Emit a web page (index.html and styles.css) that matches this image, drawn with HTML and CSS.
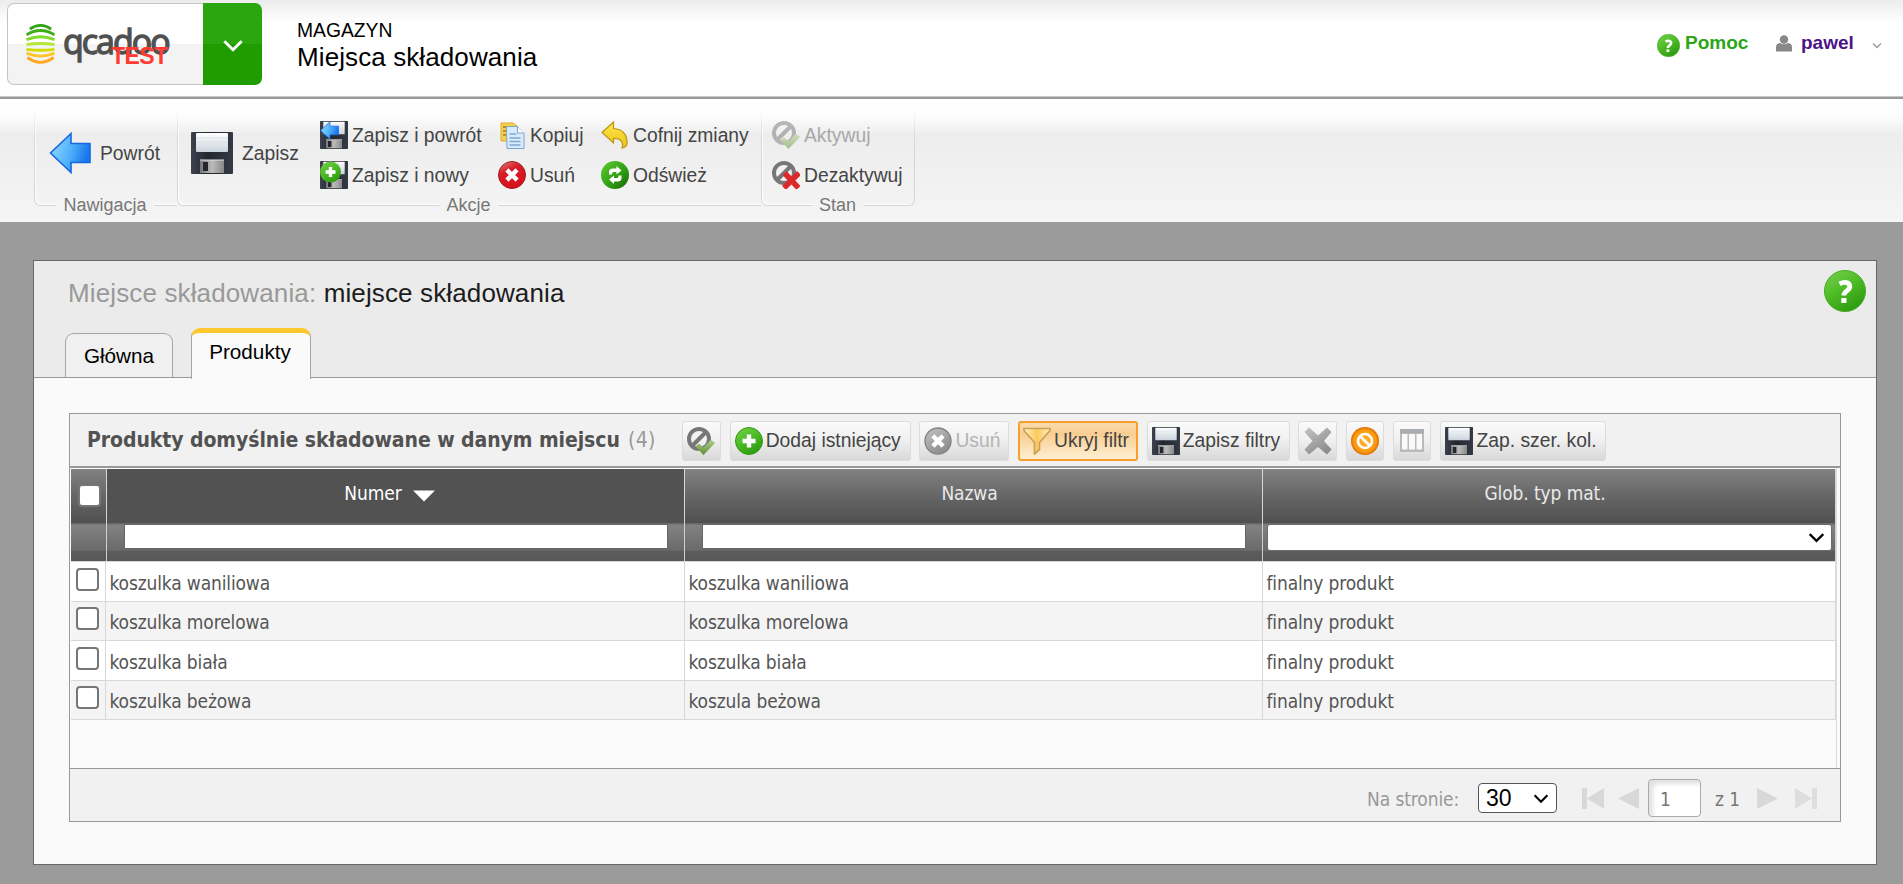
FILE: index.html
```html
<!DOCTYPE html>
<html lang="pl">
<head>
<meta charset="utf-8">
<title>Miejsca składowania</title>
<link rel="stylesheet" href="styles.css">
</head>
<body>
<svg class="defs" width="0" height="0" aria-hidden="true">
  <defs>
    <linearGradient id="gBlue" x1="0" y1="0" x2="1" y2="0.3"><stop offset="0" stop-color="#9adcff"/><stop offset=".6" stop-color="#4fb0fa"/><stop offset="1" stop-color="#1a78ee"/></linearGradient>
    <linearGradient id="gDark" x1="0" y1="0" x2="1" y2="0"><stop offset="0" stop-color="#3c4250"/><stop offset=".4" stop-color="#23262e"/><stop offset="1" stop-color="#343a46"/></linearGradient>
    <linearGradient id="gLabel" x1="0" y1="0" x2="0" y2="1"><stop offset="0" stop-color="#fff"/><stop offset="1" stop-color="#c9d2dc"/></linearGradient>
    <linearGradient id="gMetal" x1="0" y1="0" x2="1" y2="0"><stop offset="0" stop-color="#777"/><stop offset=".5" stop-color="#bbb"/><stop offset="1" stop-color="#888"/></linearGradient>
    <linearGradient id="gGreen" x1="0" y1="0" x2=".6" y2="1"><stop offset="0" stop-color="#7bd04e"/><stop offset=".5" stop-color="#4fbd28"/><stop offset="1" stop-color="#2f9c12"/></linearGradient>
    <linearGradient id="gRefresh" x1="0" y1="0" x2="1" y2="1"><stop offset="0" stop-color="#5cd02c"/><stop offset=".6" stop-color="#2f9a14"/><stop offset="1" stop-color="#156300"/></linearGradient>
    <linearGradient id="gRed" x1="0" y1="0" x2=".5" y2="1"><stop offset="0" stop-color="#e88a8a"/><stop offset=".4" stop-color="#d6202a"/><stop offset="1" stop-color="#d8101a"/></linearGradient>
    <linearGradient id="gGrey" x1="0" y1="0" x2=".6" y2="1"><stop offset="0" stop-color="#c4c4c4"/><stop offset="1" stop-color="#8c8c8c"/></linearGradient>
    <linearGradient id="gYellow" x1="0" y1="0" x2="0" y2="1"><stop offset="0" stop-color="#ffe94a"/><stop offset="1" stop-color="#ecc11a"/></linearGradient>
    <linearGradient id="gFunnel" x1="0" y1="0" x2="1" y2="0"><stop offset="0" stop-color="#fff1c0"/><stop offset=".5" stop-color="#fcc95a"/><stop offset="1" stop-color="#fff0c4"/></linearGradient>
    <radialGradient id="gOrange" cx=".5" cy=".5" r=".5"><stop offset="0" stop-color="#ffb52e"/><stop offset=".8" stop-color="#f79a10"/><stop offset="1" stop-color="#e06a00"/></radialGradient>
    <linearGradient id="gCheck" x1="0" y1="0" x2="0" y2="1"><stop offset="0" stop-color="#b3cf92"/><stop offset="1" stop-color="#5f8f2e"/></linearGradient>

    <symbol id="arrow" viewBox="0 0 42 42"><path d="M22 1.500 1.500 21 22 40.500V30.500h19V11.500H22z" fill="url(#gBlue)" stroke="#1668e0" stroke-width="1.600"/></symbol>
    <symbol id="floppy" viewBox="0 0 42 42"><rect width="42" height="42" rx="1" fill="url(#gDark)"/><rect x="5" y="1" width="32" height="19" rx="1" fill="url(#gLabel)"/><path d="M5 6h32M5 10h32M5 14h32" stroke="#dfe4ea" stroke-width="1"/><path d="M9 28h24v13H9z" fill="url(#gMetal)"/><path d="M12 30h5v9h-5z" fill="#23262e"/><path d="M9 28h24" stroke="#e0e0e0"/></symbol>
    <symbol id="saveback" viewBox="0 0 28 28"><use href="#floppy" width="28" height="28"/><use href="#arrow" x="0" y="-1" width="19" height="21"/></symbol>
    <symbol id="savenew" viewBox="0 0 28 28"><use href="#floppy" width="28" height="28"/><circle cx="10.500" cy="11" r="10.500" fill="url(#gGreen)"/><path d="M10.500 6v10M5.500 11h10" stroke="#fff" stroke-width="3.400"/></symbol>
    <symbol id="copy" viewBox="0 0 28 28"><path d="M3 2h12l4 3v15H3z" fill="#f7cf4e" stroke="#d9ac36"/><path d="M5 6h3M5 10h3M5 14h3" stroke="#a87f1a" stroke-width="1.500"/><path d="M8.500 5.500h11l6.500 7v15H9z" fill="#d9ebfa" stroke="#7aa5cf"/><path d="M19.500 5.500v6.500h6.500" fill="#fff" stroke="#7aa5cf"/><path d="M11.500 13h7M11.500 17h11M11.500 20.500h11M11.500 24h11" stroke="#7fa9d4" stroke-width="1.600"/></symbol>
    <symbol id="del" viewBox="0 0 28 28"><circle cx="14" cy="14" r="13.500" fill="url(#gRed)" stroke="#9c1a1f"/><path d="M10.500 10.500l7 7M17.500 10.500l-7 7" stroke="#fff" stroke-width="4.500" stroke-linecap="square"/></symbol>
    <symbol id="delgrey" viewBox="0 0 28 28"><circle cx="14" cy="14" r="13" fill="url(#gGrey)" stroke="#858585" stroke-width="1.400"/><path d="M10.500 10.500l7 7M17.500 10.500l-7 7" stroke="#fff" stroke-width="4.500" stroke-linecap="square"/></symbol>
    <symbol id="undo" viewBox="0 0 28 28"><path d="M1 11.500 12.500 1v6.500C21.500 8 26.500 14 26 22.500c-.2 2.500-2 4-5 4.500 2-6-1.500-10-8.500-9.500V22z" fill="url(#gYellow)" stroke="#bd9313" stroke-width="1.200"/></symbol>
    <symbol id="refresh" viewBox="0 0 28 28"><circle cx="14" cy="14" r="14" fill="url(#gRefresh)"/><path d="M8 13.500V11q0-3.500 4-3.500h3.500V5l5 4.500-5 4V11H12q-1 0-1 2.500zM20.500 14.500V17q0 3.500-4 3.500H13V23l-5-4.500 5-4V17h3.500q1 0 1-2.500z" fill="#fff"/></symbol>
    <symbol id="activate" viewBox="0 0 28 28"><circle cx="12" cy="12" r="10" fill="#f1f1f1" fill-opacity=".5" stroke="#777" stroke-width="4"/><path d="M5.500 18.500 18.500 5.500" stroke="#777" stroke-width="4"/><path d="M8.500 19.500l3.500-3 4.500 4L24 12.500l4 3.500-11.500 12z" fill="url(#gCheck)"/></symbol>
    <symbol id="deactivate" viewBox="0 0 28 28"><circle cx="12" cy="12" r="10" fill="#f1f1f1" fill-opacity=".5" stroke="#777" stroke-width="4"/><path d="M5.500 18.500 18.500 5.500" stroke="#777" stroke-width="4"/><path d="M12.500 12 26.500 27M27 12 12 27" stroke="#dc2a2a" stroke-width="5.500"/></symbol>
    <symbol id="add" viewBox="0 0 28 28"><circle cx="14" cy="14" r="13.500" fill="url(#gGreen)" stroke="#2f9c12"/><path d="M14 7.500v13M7.500 14h13" stroke="#fff" stroke-width="4.400"/></symbol>
    <symbol id="funnel" viewBox="0 0 28 28"><path d="M1 1.500h26v2L16.500 15.500v7L11.500 27V15.500L1 3.500z" fill="url(#gFunnel)" stroke="#c9a25a" stroke-width="1.700"/></symbol>
    <symbol id="cross" viewBox="0 0 28 28"><path d="M5 .5 14 8.500 23 .5 27.500 5 20 14l7.500 8.500L23 27.500 14 20l-9 7.500L.5 22.500 8.500 14 .5 5z" fill="url(#gGrey)"/></symbol>
    <symbol id="block" viewBox="0 0 28 28"><circle cx="14" cy="14" r="14" fill="url(#gOrange)"/><circle cx="14" cy="14" r="7" fill="none" stroke="#fff" stroke-width="2.600"/><path d="M9.500 9.500l9 9" stroke="#fff" stroke-width="2.600"/></symbol>
    <symbol id="columns" viewBox="0 0 28 28"><path d="M2 2h24v23H2z" fill="#b9b9b9"/><path d="M2 2h24v4H2z" fill="#a9acb0"/><path d="M4 7h5.500v15.500H4zM11 7h6v15.500h-6zM18.500 7H24v15.500h-5.500z" fill="#fafafa"/></symbol>
    <symbol id="help" viewBox="0 0 42 42"><circle cx="21" cy="21" r="20.500" fill="url(#gGreen)" stroke="#45ab22"/><path d="M15.500 13.800c5-2.600 10.300-1.300 10.300 2.700 0 4.200-6 4.500-6 9" fill="none" stroke="#fff" stroke-width="4.800"/><path d="M17.300 28h5.200v5h-5.200z" fill="#fff"/></symbol>
    <symbol id="chev" viewBox="0 0 20 12"><path d="M2 2l8 8 8-8" fill="none" stroke="currentColor" stroke-width="2.600"/></symbol>
  </defs>
</svg>

<header class="top">
  <div class="brand">
    <div class="logo">
      <svg width="29" height="42" viewBox="0 0 30 42" fill="none" stroke-width="3">
        <path d="M4 5.500Q15-2 26 5.500" stroke="#2fa313"/>
        <path d="M.5 11.500Q15 2.500 29.500 11.500" stroke="#3fae1a"/>
        <path d="M.5 16.500Q15 10.500 29.500 16.500" stroke="#7fdc2c"/>
        <path d="M.5 21.500Q15 19.500 29.500 21.500" stroke="#b6e83a"/>
        <path d="M.5 26.500Q15 28.500 29.500 26.500" stroke="#d3dc00"/>
        <path d="M.5 30.500Q15 36.500 29.500 30.500" stroke="#ffc52a"/>
        <path d="M1.500 35Q15 45 28.500 35" stroke="#ffa61a"/>
      </svg>
      <span class="word">qcadoo</span><span class="test">TEST</span>
    </div>
    <div class="menu-btn"><svg width="22" height="13"><use href="#chev"/></svg></div>
  </div>
  <div class="crumb"><div class="crumb-top">MAGAZYN</div><div class="crumb-main">Miejsca składowania</div></div>
  <div class="user">
    <svg width="23" height="23"><use href="#help"/></svg><span class="pomoc">Pomoc</span>
    <svg class="person" width="16" height="17" viewBox="0 0 16 17"><circle cx="8" cy="4.500" r="4.200" fill="#888"/><path d="M0 16.500V12q0-3.500 4-4 4 2.500 8 0 4 .5 4 4v4.500z" fill="#888"/></svg><span class="name">pawel</span>
    <svg class="down" width="10" height="7"><use href="#chev"/></svg>
  </div>
</header>

<nav class="ribbon">
  <section class="group g-nav">
    <div class="items"><div class="big"><svg><use href="#arrow"/></svg><span>Powrót</span></div></div>
    <div class="legend"><span>Nawigacja</span></div>
  </section>
  <section class="group g-act">
    <div class="items">
      <div class="big"><svg><use href="#floppy"/></svg><span>Zapisz</span></div>
      <div class="stack s1"><div class="small"><svg><use href="#saveback"/></svg><span>Zapisz i powrót</span></div><div class="small"><svg><use href="#savenew"/></svg><span>Zapisz i nowy</span></div></div>
      <div class="stack s2"><div class="small"><svg><use href="#copy"/></svg><span>Kopiuj</span></div><div class="small"><svg><use href="#del"/></svg><span>Usuń</span></div></div>
      <div class="stack"><div class="small"><svg><use href="#undo"/></svg><span>Cofnij zmiany</span></div><div class="small"><svg><use href="#refresh"/></svg><span>Odśwież</span></div></div>
    </div>
    <div class="legend"><span>Akcje</span></div>
  </section>
  <section class="group g-state">
    <div class="items">
      <div class="stack"><div class="small off"><svg><use href="#activate"/></svg><span>Aktywuj</span></div><div class="small"><svg><use href="#deactivate"/></svg><span>Dezaktywuj</span></div></div>
    </div>
    <div class="legend"><span>Stan</span></div>
  </section>
</nav>

<main class="page">
  <div class="page-head">
    <div class="title-row"><h1><span>Miejsce składowania:</span> miejsce składowania</h1><svg width="42" height="42"><use href="#help"/></svg></div>
    <div class="tabs"><div class="tab">Główna</div><div class="tab active">Produkty</div></div>
  </div>

  <div class="grid">
    <div class="grid-head">
      <div class="grid-title">Produkty domyślnie składowane w danym miejscu</div><div class="count">(4)</div>
      <div class="tools">
        <div class="btn b1"><svg><use href="#activate"/></svg></div>
        <div class="btn b2"><svg><use href="#add"/></svg>Dodaj istniejący</div>
        <div class="btn b3 dis"><svg><use href="#delgrey"/></svg>Usuń</div>
        <div class="btn b4 on"><svg><use href="#funnel"/></svg>Ukryj filtr</div>
        <div class="btn b5"><svg><use href="#floppy"/></svg>Zapisz filtry</div>
        <div class="btn b6"><svg><use href="#cross"/></svg></div>
        <div class="btn b7"><svg><use href="#block"/></svg></div>
        <div class="btn b8"><svg><use href="#columns"/></svg></div>
        <div class="btn b9"><svg><use href="#floppy"/></svg>Zap. szer. kol.</div>
      </div>
    </div>
    <div class="table">
      <div class="row th"><div class="c ck"><i class="box"></i></div><div class="c sorted"><span>Numer</span><svg width="22" height="12" viewBox="0 0 22 12"><path d="M0 .5h22L11 11.500z" fill="#fff"/></svg></div><div class="c">Nazwa</div><div class="c">Glob. typ mat.</div></div>
      <div class="row filter"><div class="c"></div><div class="c"><i class="inp"></i></div><div class="c"><i class="inp"></i></div><div class="c last"><div class="sel"><svg width="17" height="11"><use href="#chev"/></svg></div></div></div>
      <div class="row td"><div class="c ck"><i class="box"></i></div><div class="c">koszulka waniliowa</div><div class="c">koszulka waniliowa</div><div class="c">finalny produkt</div></div>
      <div class="row td alt"><div class="c ck"><i class="box"></i></div><div class="c">koszulka morelowa</div><div class="c">koszulka morelowa</div><div class="c">finalny produkt</div></div>
      <div class="row td tall"><div class="c ck"><i class="box"></i></div><div class="c">koszulka biała</div><div class="c">koszulka biała</div><div class="c">finalny produkt</div></div>
      <div class="row td alt"><div class="c ck"><i class="box"></i></div><div class="c">koszulka beżowa</div><div class="c">koszula beżowa</div><div class="c">finalny produkt</div></div>
    </div>
    <div class="pager">
      <span class="per">Na stronie:</span>
      <div class="psel"><span>30</span><svg width="16" height="11"><use href="#chev"/></svg></div>
      <svg class="first" width="22" height="21" viewBox="0 0 22 21"><path d="M0 0h5v21H0zM22 0v21L5 10.500z" fill="#d8d8d8"/></svg>
      <svg class="prev" width="21" height="21" viewBox="0 0 21 21"><path d="M21 0v21L0 10.500z" fill="#d8d8d8"/></svg>
      <div class="pin">1</div>
      <span class="of">z 1</span>
      <svg class="next" width="21" height="21" viewBox="0 0 21 21"><path d="M0 0v21l21-10.500z" fill="#d8d8d8"/></svg>
      <svg class="end" width="22" height="21" viewBox="0 0 22 21"><path d="M17 0h5v21h-5zM0 0v21l17-10.500z" fill="#dedede"/></svg>
    </div>
  </div>
</main>
</body>
</html>
```
FILE: styles.css
```css
* { box-sizing: border-box; }
body { margin: 0; height: 884px; overflow: hidden; background: #9b9b9b; font-family: "Liberation Sans", Arial, sans-serif; font-size: 19.300px; color: #000; }
svg { display: block; flex: none; }
.defs { position: absolute; }

/* top bar */
.top { height: 97px; display: flex; border-bottom: 1px solid #c8c8c8; background: linear-gradient(#ececec, #fff 23px); }
.brand { display: flex; margin: 3px 0 0 7px; width: 255px; height: 82px; }
.logo { position: relative; width: 196px; display: flex; border: 1px solid #c4c4c4; border-right: 0; border-radius: 7px 0 0 7px; background: linear-gradient(#fff 50%, #f3f3f3 50%); padding: 19px 0 0 18px; }
.word { margin: -5px 0 0 8px; font: 34px/46px "Open Sans", sans-serif; height: 46px; color: #505050; -webkit-text-stroke: 1.300px #505050; letter-spacing: -2px; }
.test { position: absolute; left: 103px; top: 39px; font-weight: bold; font-size: 23px; line-height: 26px; letter-spacing: -.6px; color: #ff3b30; }
.menu-btn { width: 59px; display: flex; align-items: center; justify-content: center; padding-top: 3px; color: #fff; background: linear-gradient(#2ba60f 50%, #219c00 50%); border-radius: 0 7px 7px 0; }
.crumb { margin: 18px 0 0 35px; }
.crumb-top { line-height: 25px; font-size: 19.300px; }
.crumb-main { font-size: 26px; line-height: 28px; letter-spacing: .1px; }
.user { margin-left: auto; margin-top: 31px; height: 28px; width: 246px; display: flex; align-items: center; font-weight: bold; font-size: 19px; }
.pomoc { color: #2ba616; margin: -5px 27px 0 5px; width: 64px; }
.name { color: #4c1587; margin: -5px 0 0 9px; width: 71px; }
.person { margin-top: -3px; }
.down { color: #999; }

/* ribbon */
.ribbon { height: 125px; border-top: 2px solid #999; padding-left: 34px; display: flex; background: linear-gradient(#fff, #fcfcfc 15%, #ededed 29%, #f5f5f5); color: #444; }
.group { height: 116px; display: flex; flex-direction: column; position: relative; }
.group::before { content: ""; position: absolute; left: 0; right: 0; top: 9px; height: 97px; border: 1px solid #d4d4d4; border-top: 0; border-right: 0; border-radius: 0 0 0 6px; -webkit-mask-image: linear-gradient(transparent, #000 40px); mask-image: linear-gradient(transparent, #000 40px); box-shadow: inset 1px -1px #fff; }
.g-nav { width: 143px; }
.g-act { width: 584px; }
.g-state { width: 154px; }
.g-state::before { border-right: 1px solid #d4d4d4; border-radius: 0 0 6px 6px; }
.items { height: 96px; display: flex; padding: 22px 0 0 14px; }
.g-nav .items { padding-left: 15px; }
.g-state .items { padding-left: 11px; }
.big { display: flex; align-items: center; height: 64px; gap: 9px; }
.big span, .small span { padding-top: 2px; }
.big svg { width: 42px; height: 42px; }
.g-act .big { width: 129px; }
.stack { display: grid; grid-template-rows: 28px 28px; row-gap: 12px; }
.s1 { width: 178px; }
.s2 { width: 103px; }
.small { display: flex; align-items: center; gap: 4px; line-height: 28px; white-space: nowrap; }
.small svg, .btn svg { width: 28px; height: 28px; }
.off { color: #a8a8a8; }
.off svg { opacity: .5; }
.legend { position: relative; height: 20px; display: flex; justify-content: center; color: #777; font-size: 18px; line-height: 20px; }
.legend span { background: #f3f3f3; padding: 0 7px; margin-right: 1px; }

/* page panel */
.page { margin: 38px 26px 0 33px; height: 605px; border: 1px solid #686868; background: #fafafa; }
.page-head { height: 117px; background: #ebebeb; border-bottom: 1px solid #999; }
.title-row { display: flex; justify-content: space-between; height: 67px; padding: 9px 10px 0 34px; }
h1 { margin: 7px 0 0; font-weight: normal; font-size: 26px; line-height: 32px; letter-spacing: .13px; color: #1c1c1c; }
h1 span { color: #999; }
.tabs { display: flex; align-items: flex-end; height: 50px; padding-left: 31px; gap: 18px; font-size: 20.700px; }
.tab { width: 108px; height: 44px; margin-bottom: 1px; border: 1px solid #a6a6a6; border-bottom: 0; border-radius: 9px 9px 0 0; background: #f0f0f0; text-align: center; line-height: 44px; }
.tab.active { width: 120px; height: 51px; margin-bottom: -1px; border-top: 5px solid #ffc82e; background: #fafafa; line-height: 37px; padding-right: 2px; }

/* data grid */
.grid { margin: 35px 35px 0 35px; height: 409px; border: 1px solid #999; background: #fbfbfb; font-family: "DejaVu Sans Condensed", "DejaVu Sans", sans-serif; font-stretch: condensed; }
.grid-head { display: flex; height: 54px; background: #f1f1f1; border-bottom: 2px solid #999; }
.grid-title { width: 541px; margin-left: 17px; font-weight: bold; font-size: 21px; line-height: 52px; letter-spacing: -.07px; color: #525252; white-space: nowrap; }
.count { width: 54px; font-size: 21px; line-height: 52px; letter-spacing: .3px; color: #999; }
.tools { display: flex; gap: 8.700px; padding-top: 7px; font-family: "Liberation Sans", Arial, sans-serif; }
.btn { height: 40px; display: flex; align-items: center; padding: 0 0 0 4px; gap: 3px; border: 1px solid #dcdcdc; border-radius: 3px; background: linear-gradient(#fafafa, #f1f1f1 45%, #d8d8d8); color: #444; white-space: nowrap; }
.b1 { width: 39px; } .b2 { width: 181px; } .b3 { width: 90px; } .b4 { width: 120px; padding-left: 3px; }
.b5 { width: 143px; } .b6 { width: 39px; padding-left: 5px; } .b7 { width: 38px; } .b8 { width: 38px; } .b9 { width: 166px; gap: 4px; }
.dis { color: #b4b4b4; }
.on { border: 2px solid #f5a02c; background: linear-gradient(#fbdcae, #f9cd90 30%, #fff0d2); }
.table { height: 300px; padding: 1px 0 0 1px; margin-right: 3px; border-right: 1px solid #ddd; }
.row { display: grid; grid-template-columns: 36px 578px 578px 573px; }
.c { border-right: 1px solid #d8d8d8; display: flex; align-items: center; }
.th { height: 54px; }
.th .c { justify-content: center; padding: 0 8px 7px 0; background: linear-gradient(#828282, #666 50%, #505050); color: #e9e9e9; font-size: 19px; letter-spacing: -.1px; }
.th .sorted { background: #525252; color: #fff; }
.sorted span { margin-left: -4px; }
.sorted svg { margin: 6px 0 0 11px; }
.box { width: 23px; height: 23px; border: 2px solid #767676; border-radius: 4px; background: #fff; }
.th .ck { padding: 0 0 2px 1px; }
.filter { height: 39px; border-bottom: 1px solid #d8d8d8; }
.filter .c { align-items: flex-start; background: linear-gradient(#696969 1px, #828282 2px, #6a6a6a 72%, #5c5c5c 74%, #585858); padding: 1px 16px 0 17px; }
.inp { width: 544px; height: 25px; flex: none; border: 1px solid #666; background: #fff; }
.filter .last { padding: 1px 3px 0 4px; }
.sel { flex: 1; height: 27px; border: 1px solid #6b6b6b; border-radius: 3px; background: #fff; display: flex; justify-content: flex-end; align-items: center; padding-right: 6px; }
.td { height: 39px; border-bottom: 1px solid #d8d8d8; background: #fff; color: #555; font-size: 19px; letter-spacing: -.14px; grid-template-columns: 35px 579px 578px 573px; }
.filter + .td, .tall { height: 40px; }
.td .c { padding: 2px 0 0 3.500px; }
.td .ck { align-items: flex-start; padding: 6px 0 0 5px; }
.alt .ck { padding-top: 5px; }
.alt { background: #f4f4f4; }
.th + .filter .c { border-right-color: #cfcfcf; }

/* pager */
.pager { height: 53px; display: flex; align-items: center; padding-left: 1297px; border-top: 1px solid #999; background: #f1f1f1; color: #777; font-size: 19px; letter-spacing: -.1px; }
.pager > svg { margin-top: 6px; }
.per { width: 111px; color: #999; }
.pager .per, .of { margin-top: 7px; white-space: nowrap; }
.psel { width: 79px; height: 30px; display: flex; align-items: center; justify-content: space-between; margin-top: 6px; padding: 0 7px; border: 1px solid #555; border-radius: 4px; background: #fff; color: #000; font: 23px "Liberation Sans", sans-serif; letter-spacing: 0; }
.pager .first { margin-left: 25px; }
.prev { margin-left: 14px; }
.pin { width: 53px; height: 38px; margin: 6px 0 0 9px; border: 1px solid #aaa; border-radius: 4px; background: #fff; box-shadow: inset 6px 6px 4px -2px #e2e2e2; padding-left: 11px; line-height: 38px; }
.of { margin-left: 14px; width: 42px; }
.end { margin-left: 17px; }
```
